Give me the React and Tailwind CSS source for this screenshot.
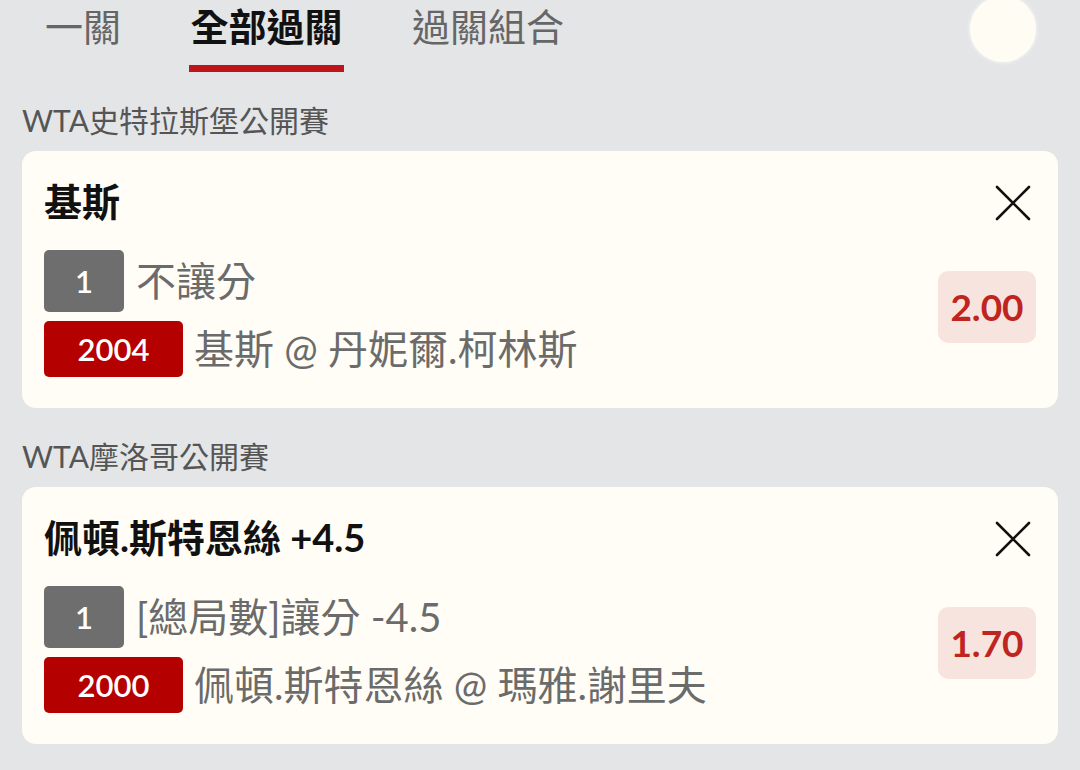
import React from 'react';

const FONT = "font-['Lato','Noto_Sans_CJK_TC',sans-serif]";

const bets = [
  {
    league: 'WTA史特拉斯堡公開賽',
    title: '基斯',
    market: '不讓分',
    pick: '1',
    code: '2004',
    match: '基斯 @ 丹妮爾.柯林斯',
    odds: '2.00',
  },
  {
    league: 'WTA摩洛哥公開賽',
    title: '佩頓.斯特恩絲 +4.5',
    market: '[總局數]讓分 -4.5',
    pick: '1',
    code: '2000',
    match: '佩頓.斯特恩絲 @ 瑪雅.謝里夫',
    odds: '1.70',
  },
];

const CloseIcon = () => (
  <svg width="36" height="36" viewBox="0 0 36 36" fill="none">
    <path d="M2 2L34 34M34 2L2 34" stroke="#111" strokeWidth="2.6" strokeLinecap="round" />
  </svg>
);

const BetCard = ({ bet }) => (
  <div className="mx-[22px] rounded-[14px] bg-[#fffdf5] pl-[22px] pr-[22px] pt-[28px] pb-[31px]">
    {/* title + remove */}
    <div className="flex items-center justify-between h-[44px]">
      <h2 className="text-[38px] leading-[44px] font-bold text-[#111]">{bet.title}</h2>
      <div className="mr-[5px] mt-[4px]">
        <CloseIcon />
      </div>
    </div>

    <div className="mt-[27px] flex items-start justify-between">
      <div className="flex flex-col gap-[9px]">
        <div className="flex items-center">
          <span className="w-[80px] h-[62px] rounded-[5px] bg-[#6e6e6e] text-white text-[31px] font-semibold flex items-center justify-center">
            {bet.pick}
          </span>
          <span className="ml-[12px] text-[40px] leading-none text-[#6b6b6b]">{bet.market}</span>
        </div>
        <div className="flex items-center">
          <span className="w-[139px] h-[56px] rounded-[5px] bg-[#b50000] text-white text-[31px] font-semibold flex items-center justify-center">
            {bet.code}
          </span>
          <span className="ml-[11px] text-[40px] leading-none text-[#6b6b6b]">{bet.match}</span>
        </div>
      </div>
      <div className="mt-[21px] w-[98px] h-[72px] rounded-[10px] bg-[#f8e4de] flex items-center justify-center text-[37px] font-bold text-[#c02420]">
        {bet.odds}
      </div>
    </div>
  </div>
);

export default function App() {
  return (
    <div className={`w-[1080px] h-[770px] overflow-hidden bg-[#e4e5e7] ${FONT}`}>
      {/* tabs */}
      <div className="flex items-start h-[72px] pl-[45px] pr-[44px]">
        <div className="flex gap-[68px]">
          <div className="text-[38px] leading-[52px] text-[#666]">一關</div>
          <div className="flex flex-col items-center">
            <div className="text-[38px] leading-[52px] font-bold text-[#111]">全部過關</div>
            <div className="mt-[13px] h-[7px] w-[155px] bg-[#c0141b]" />
          </div>
          <div className="text-[38px] leading-[52px] text-[#666]">過關組合</div>
        </div>
        <div className="ml-auto -mt-[4px] w-[66px] h-[66px] rounded-full bg-[#fffdf3] shadow-[0_0_4px_rgba(255,255,255,0.9)]" />
      </div>

      {bets.map((bet) => (
        <section key={bet.code}>
          <div className="mt-[28px] mb-[11px] px-[22px] text-[30px] leading-[40px] text-[#555]">
            {bet.league}
          </div>
          <BetCard bet={bet} />
        </section>
      ))}
    </div>
  );
}
